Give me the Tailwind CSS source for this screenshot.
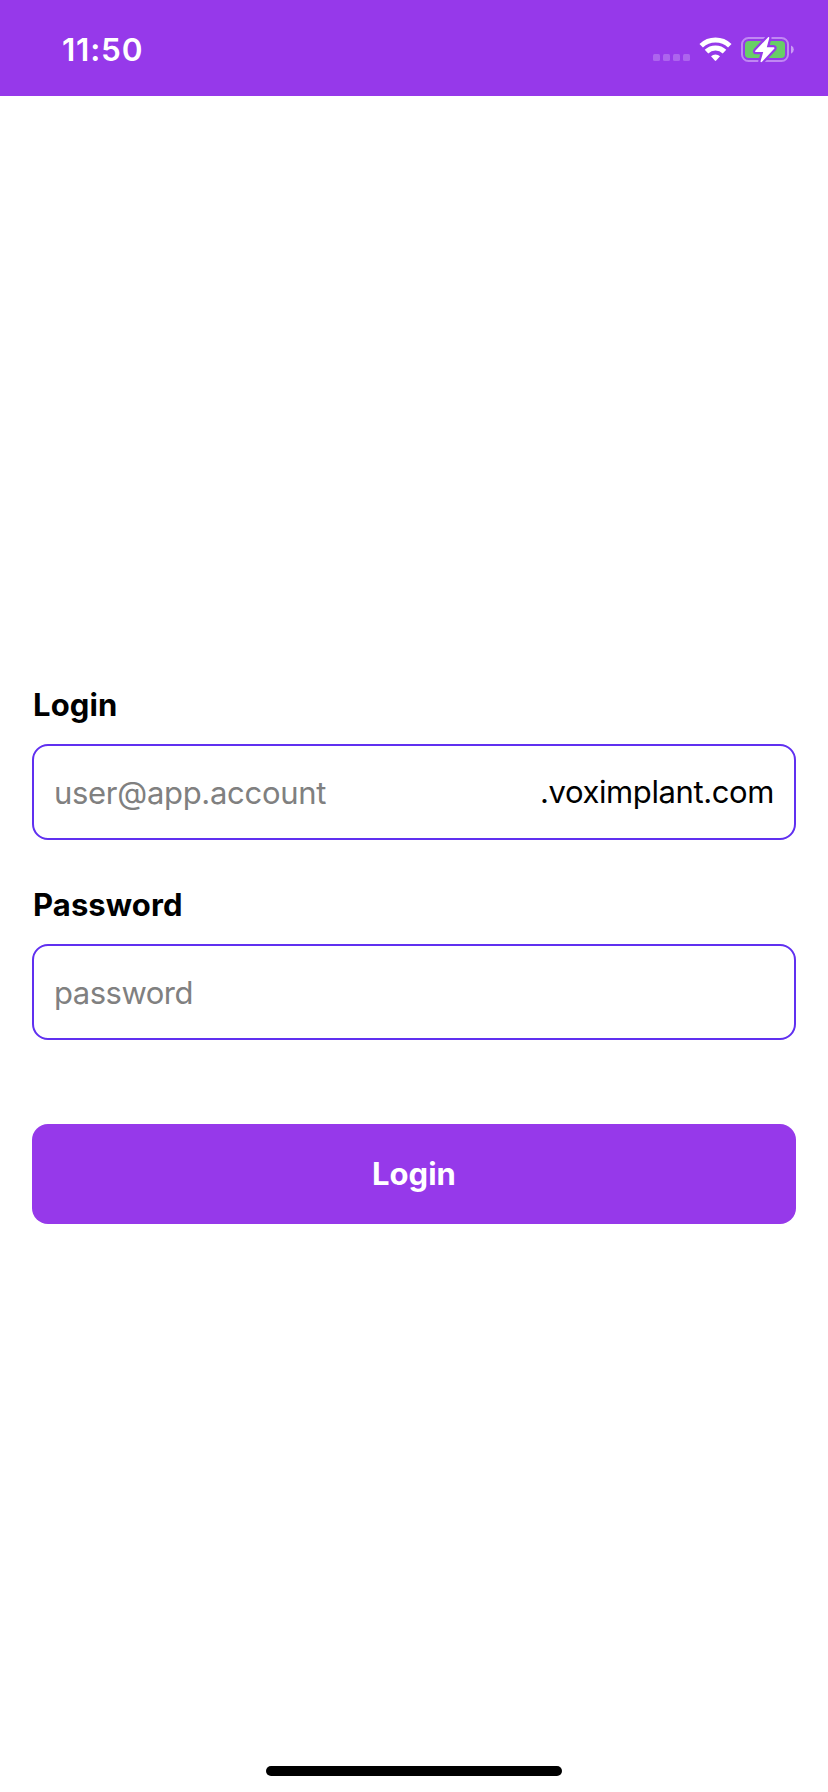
<!DOCTYPE html>
<html lang="en">
<head>
<meta charset="utf-8">
<title>Login</title>
<script src="https://cdn.jsdelivr.net/npm/@tailwindcss/browser@4"></script>
</head>
<body class="bg-white">
<div class="flex h-[1792px] w-[828px] flex-col bg-white font-['Inter',sans-serif] text-[31px] text-black">
  <header class="flex h-24 shrink-0 items-start justify-between bg-[#9639ea] pt-[30px] pr-[32px] pl-[62px] text-white">
    <span class="text-[31.5px] leading-[40px] font-semibold tracking-[0.8px]">11:50</span>
    <svg class="h-[40px] w-[146px]" viewBox="650 30 146 40" aria-hidden="true">
      <g fill="#fff" fill-opacity=".22">
        <rect x="653" y="54" width="7" height="7" rx="1.5"/>
        <rect x="663" y="54" width="7" height="7" rx="1.5"/>
        <rect x="673" y="54" width="7" height="7" rx="1.5"/>
        <rect x="683" y="54" width="7" height="7" rx="1.5"/>
      </g>
      <g fill="none" stroke="#fff" stroke-width="5">
        <path d="M701.2 45.8A20.6 20.6 0 0 1 729.8 45.8"/>
        <path d="M706.5 51.6A12.8 12.8 0 0 1 724.5 51.6"/>
      </g>
      <path d="M711 56.3A6.6 6.6 0 0 1 720 56.3L716.2 60.5Q715.5 61.3 714.8 60.5Z" fill="#fff"/>
      <rect x="742" y="38" width="46" height="23" rx="6.5" fill="none" stroke="#fff" stroke-opacity=".4" stroke-width="2"/>
      <path d="M791 45.6Q793.8 46.8 793.8 49.6Q793.8 52.6 791 53.8Z" fill="#fff" fill-opacity=".5"/>
      <rect x="745" y="41" width="40" height="17" rx="3.8" fill="#68ce67"/>
      <path d="M768.3 37L755.5 50.6Q754.6 52 756 52H763.2L760.5 61.4Q760.8 62.8 762 61.8L774.2 48.8Q775 47.2 773.5 47.2H766.8L769.3 38Q769.3 36.5 768.3 37Z" fill="#fff" stroke="#9639ea" stroke-width="4.5" stroke-linejoin="round" paint-order="stroke"/>
    </svg>
  </header>
  <main class="flex flex-1 flex-col px-8 pt-[589px]">
    <label class="mb-[19px] pl-px text-[31px] leading-[40px] font-bold tracking-[0.1px]" for="login">Login</label>
    <div class="flex h-24 items-center rounded-[16px] border-2 border-[#6030f0] px-5">
      <span id="login" class="flex-1 pt-0.5 tracking-[-0.3px] text-[#808080]">user@app.account</span>
      <span class="tracking-[-0.4px]">.voximplant.com</span>
    </div>
    <label class="mt-[45px] mb-[19px] pl-px text-[31px] leading-[40px] font-bold tracking-[0.1px]" for="password">Password</label>
    <div class="flex h-24 items-center rounded-[16px] border-2 border-[#6030f0] px-5">
      <span id="password" class="pt-0.5 tracking-[-0.5px] text-[#808080]">password</span>
    </div>
    <button class="mt-[84px] h-[100px] rounded-[16px] bg-[#9639ea] text-[31px] font-bold text-white">Login</button>
  </main>
  <footer class="mb-4 h-2.5 w-[296px] shrink-0 self-center rounded-full bg-black"></footer>
</div>
</body>
</html>
